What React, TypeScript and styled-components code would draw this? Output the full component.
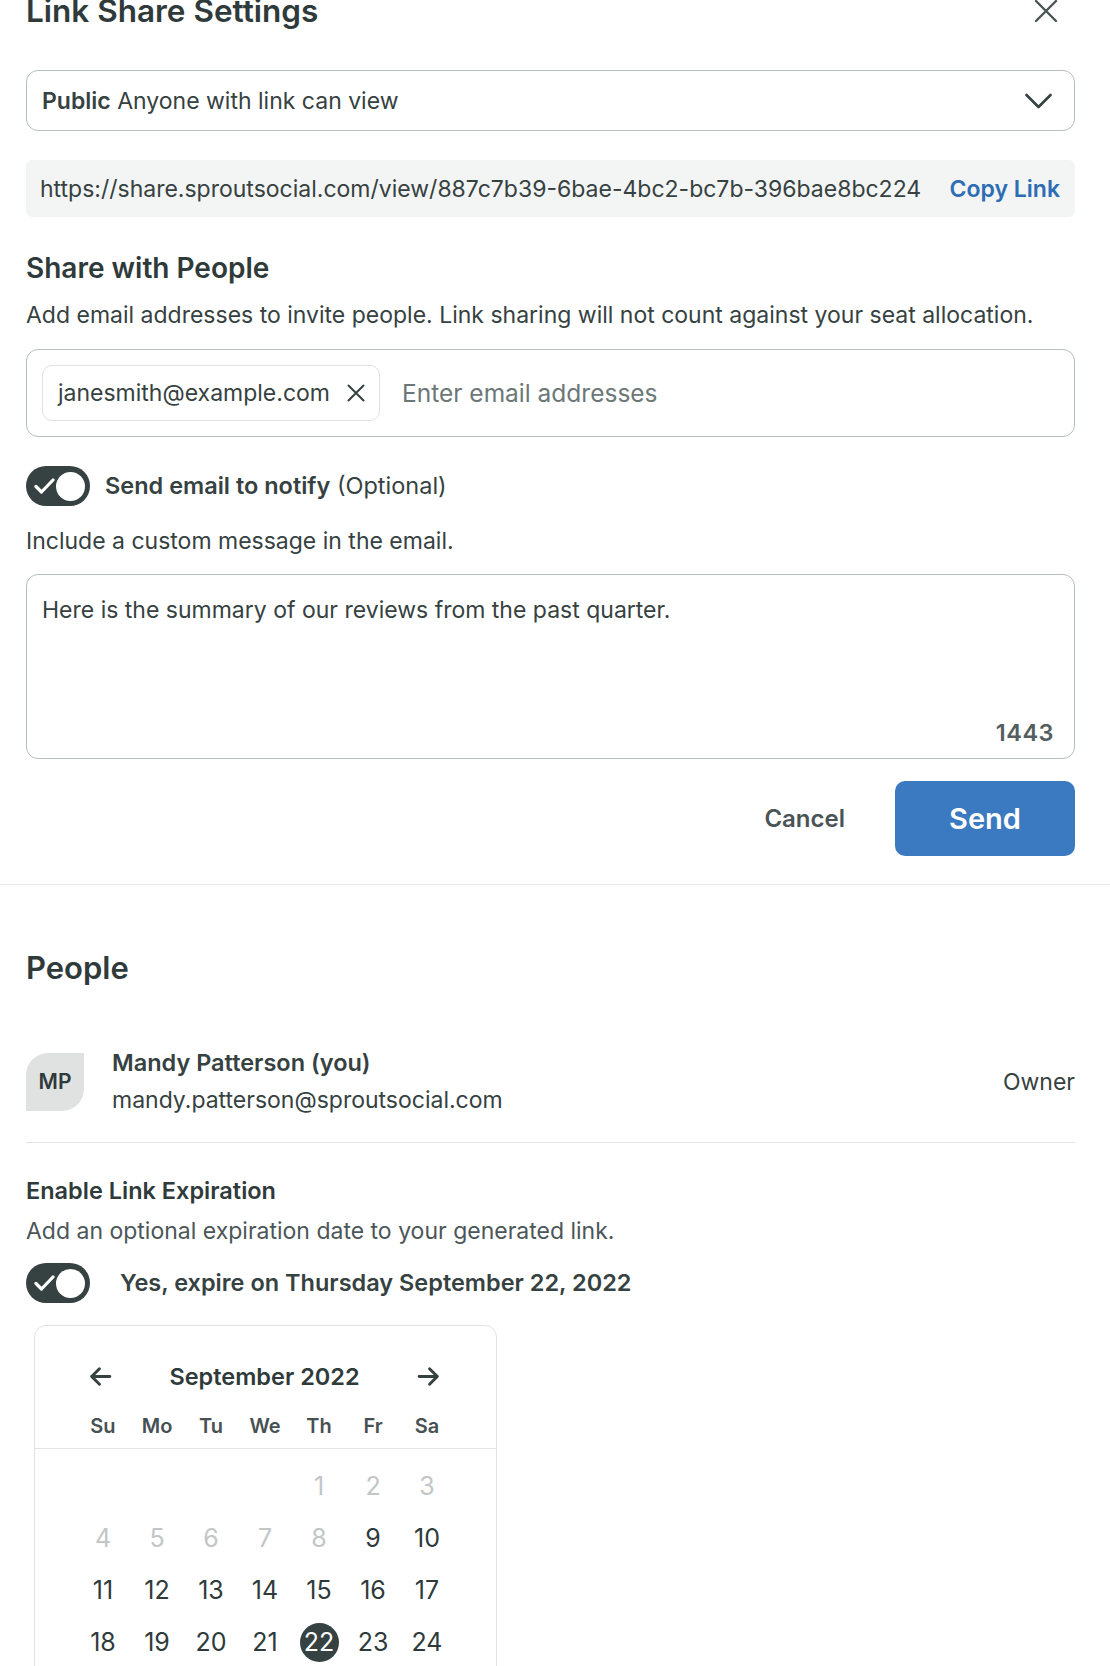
import React from "react";
import styled, { createGlobalStyle } from "styled-components";

const GlobalStyle = createGlobalStyle`
  html, body { margin: 0; padding: 0; background: #ffffff; }
  body {
    font-family: Inter, "Noto Sans", "Liberation Sans", sans-serif;
    color: #364141;
    -webkit-font-smoothing: antialiased;
    overflow: hidden;
  }
  * { box-sizing: border-box; }
`;

const Page = styled.div`
  width: 1110px;
  display: flex;
  flex-direction: column;
`;

const Section = styled.section<{ $divider?: boolean }>`
  display: flex;
  flex-direction: column;
  padding: 0 35px 0 26px;
  ${(p) => (p.$divider ? "padding-bottom: 28px; border-bottom: 1px solid #e6e8e8;" : "")}
`;

const Header = styled.div`
  display: flex;
  align-items: center;
  justify-content: space-between;
  height: 44px;
  margin-top: -11px;
`;

const Title = styled.h1`
  margin: 0;
  font-size: 31.5px;
  line-height: 44px;
  font-weight: 600;
  color: #2f3a3b;
`;

const IconButton = styled.button`
  width: 58px;
  height: 44px;
  border: 0;
  background: transparent;
  padding: 0;
  display: flex;
  align-items: center;
  justify-content: center;
  cursor: pointer;
`;

const SelectBox = styled.div`
  margin-top: 37px;
  height: 61px;
  border: 1px solid #b7bcbd;
  border-radius: 12px;
  display: flex;
  align-items: center;
  justify-content: space-between;
  padding: 0 22px 0 15px;
  font-size: 23px;
`;

const Strong = styled.span`
  font-weight: 600;
`;

const LinkBar = styled.div`
  margin-top: 29px;
  height: 57px;
  background: #f3f4f4;
  border-radius: 6px;
  display: flex;
  align-items: center;
  justify-content: space-between;
  padding: 0 15px 0 14px;
  font-size: 23px;
`;

const CopyLink = styled.button`
  border: 0;
  background: transparent;
  padding: 0;
  font-family: inherit;
  font-size: 23px;
  font-weight: 600;
  color: #2c6db3;
  cursor: pointer;
`;

const SectionHeading = styled.h2<{ $size: number; $lh: number; $top: number }>`
  margin: ${(p) => p.$top}px 0 0;
  font-size: ${(p) => p.$size}px;
  line-height: ${(p) => p.$lh}px;
  font-weight: 600;
  color: #2f3a3b;
`;

const Text = styled.p<{ $top: number; $muted?: boolean }>`
  margin: ${(p) => p.$top}px 0 0;
  font-size: 23px;
  line-height: 28px;
  color: ${(p) => (p.$muted ? "#4b5658" : "#364141")};
`;

const EmailField = styled.div`
  margin-top: 20px;
  height: 88px;
  border: 1px solid #b7bcbd;
  border-radius: 12px;
  display: flex;
  align-items: center;
  gap: 22px;
  padding: 0 15px;
`;

const Chip = styled.div`
  height: 56px;
  border: 1px solid #dfe2e2;
  border-radius: 10px;
  display: flex;
  align-items: center;
  gap: 17px;
  padding: 0 14px 0 15px;
  font-size: 23px;
`;

const Placeholder = styled.span`
  font-size: 24.5px;
  color: #6c7778;
`;

const ToggleRow = styled.div<{ $top: number; $gap: number }>`
  margin-top: ${(p) => p.$top}px;
  display: flex;
  align-items: center;
  gap: ${(p) => p.$gap}px;
`;

const ToggleTrack = styled.div`
  width: 64px;
  height: 40px;
  border-radius: 20px;
  background: #364141;
  display: flex;
  align-items: center;
  justify-content: space-between;
  padding: 0 5px 0 8px;
  flex-shrink: 0;
`;

const Knob = styled.div`
  width: 29px;
  height: 29px;
  border-radius: 50%;
  background: #ffffff;
`;

const ToggleLabel = styled.span<{ $size: number }>`
  font-size: ${(p) => p.$size}px;
  line-height: 28px;
`;

const MessageBox = styled.div`
  margin-top: 19px;
  height: 185px;
  border: 1px solid #b7bcbd;
  border-radius: 12px;
  display: flex;
  flex-direction: column;
  padding: 21px 20px 11px 15px;
`;

const MessageText = styled.div`
  flex: 1;
  font-size: 23px;
  line-height: 28px;
`;

const Counter = styled.div`
  align-self: flex-end;
  font-size: 23.5px;
  line-height: 28px;
  font-weight: 600;
  color: #545e60;
  letter-spacing: 0.5px;
`;

const Actions = styled.div`
  margin-top: 22px;
  display: flex;
  justify-content: flex-end;
  align-items: center;
  gap: 50px;
`;

const CancelButton = styled.button`
  border: 0;
  background: transparent;
  padding: 0;
  font-family: inherit;
  font-size: 24px;
  font-weight: 600;
  color: #4a5456;
  cursor: pointer;
`;

const SendButton = styled.button`
  width: 180px;
  height: 75px;
  border: 0;
  border-radius: 10px;
  background: #3b7ac1;
  color: #ffffff;
  font-family: inherit;
  font-size: 29px;
  font-weight: 600;
  cursor: pointer;
`;

const PersonRow = styled.div`
  margin-top: 62px;
  display: flex;
  align-items: center;
  gap: 28px;
  padding-bottom: 27px;
  border-bottom: 1px solid #e3e5e5;
`;

const Avatar = styled.div`
  width: 58px;
  height: 58px;
  border-radius: 22px 0 22px 0;
  background: #e0e2e2;
  display: flex;
  align-items: center;
  justify-content: center;
  font-size: 21px;
  font-weight: 600;
  color: #2f3a3b;
  flex-shrink: 0;
`;

const PersonInfo = styled.div`
  flex: 1;
  display: flex;
  flex-direction: column;
  gap: 7px;
`;

const PersonName = styled.div`
  font-size: 23.5px;
  line-height: 30px;
  font-weight: 600;
`;

const PersonEmail = styled.div`
  font-size: 23px;
  line-height: 30px;
`;

const Role = styled.div`
  font-size: 23px;
`;

const Calendar = styled.div`
  margin: 22px 0 0 8px;
  width: 463px;
  border: 1px solid #e1e3e3;
  border-radius: 12px;
  padding-top: 35px;
  padding-bottom: 30px;
`;

const CalHeader = styled.div`
  height: 30px;
  display: flex;
  align-items: center;
  justify-content: space-between;
  padding: 0 54px 0 52px;
`;

const MonthTitle = styled.div`
  font-size: 23.5px;
  font-weight: 600;
  color: #2f3a3b;
`;

const ArrowButton = styled.button`
  width: 26px;
  height: 26px;
  border: 0;
  background: transparent;
  padding: 0;
  display: flex;
  align-items: center;
  justify-content: center;
`;

const WeekRow = styled.div`
  margin-top: 23px;
  display: grid;
  grid-template-columns: repeat(7, 54px);
  padding: 0 41px 10px;
  border-bottom: 1px solid #e3e5e5;
`;

const WeekDay = styled.div`
  text-align: center;
  font-size: 20px;
  line-height: 24px;
  font-weight: 600;
  color: #475153;
`;

const DaysGrid = styled.div`
  margin-top: 11px;
  display: grid;
  grid-template-columns: repeat(7, 54px);
  grid-auto-rows: 52px;
  padding: 0 41px;
`;

const DayCell = styled.div`
  display: flex;
  align-items: center;
  justify-content: center;
`;

const DayNumber = styled.span<{ $disabled?: boolean; $selected?: boolean }>`
  width: 39px;
  height: 39px;
  border-radius: 50%;
  display: flex;
  align-items: center;
  justify-content: center;
  font-size: 25px;
  color: ${(p) => (p.$selected ? "#ffffff" : p.$disabled ? "#c2c6c7" : "#2f3a3b")};
  background: ${(p) => (p.$selected ? "#364141" : "transparent")};
`;

const CloseIcon = () => (
  <svg width="24" height="24" viewBox="0 0 24 24" fill="none">
    <path d="M2 2L22 22M22 2L2 22" stroke="#4a5456" strokeWidth="2.4" strokeLinecap="round" />
  </svg>
);

const ChevronDown = () => (
  <svg width="27" height="16" viewBox="0 0 27 16" fill="none">
    <path d="M1.5 2L13.5 14L25.5 2" stroke="#364141" strokeWidth="2.6" strokeLinecap="round" strokeLinejoin="round" />
  </svg>
);

const SmallX = () => (
  <svg width="18" height="18" viewBox="0 0 18 18" fill="none">
    <path d="M1.5 1.5L16.5 16.5M16.5 1.5L1.5 16.5" stroke="#364141" strokeWidth="2" strokeLinecap="round" />
  </svg>
);

const Check = () => (
  <svg width="21" height="16" viewBox="0 0 21 16" fill="none">
    <path d="M2 8.5L7.5 14L19 2" stroke="#ffffff" strokeWidth="3.2" strokeLinecap="round" strokeLinejoin="round" />
  </svg>
);

const Arrow = ({ dir }: { dir: "left" | "right" }) => (
  <svg width="25" height="25" viewBox="0 0 24 24" fill="none">
    <path
      d={dir === "left" ? "M21 12H3.5M11 4.5L3.5 12L11 19.5" : "M3 12H20.5M13 4.5L20.5 12L13 19.5"}
      stroke="#364141"
      strokeWidth="2.8"
      strokeLinecap="round"
      strokeLinejoin="round"
    />
  </svg>
);

const Toggle = () => (
  <ToggleTrack>
    <Check />
    <Knob />
  </ToggleTrack>
);

const weekDays = ["Su", "Mo", "Tu", "We", "Th", "Fr", "Sa"];
const days: (number | null)[] = [null, null, null, null, 1, 2, 3];
for (let d = 4; d <= 30; d++) days.push(d);

export default function App() {
  return (
    <Page>
      <GlobalStyle />
      <Section $divider>
        <Header>
          <Title>Link Share Settings</Title>
          <IconButton aria-label="Close">
            <CloseIcon />
          </IconButton>
        </Header>

        <SelectBox>
          <span>
            <Strong>Public</Strong> Anyone with link can view
          </span>
          <ChevronDown />
        </SelectBox>

        <LinkBar>
          <span>https://share.sproutsocial.com/view/887c7b39-6bae-4bc2-bc7b-396bae8bc224</span>
          <CopyLink>Copy Link</CopyLink>
        </LinkBar>

        <SectionHeading $size={28} $lh={32} $top={35}>Share with People</SectionHeading>
        <Text $top={17}>
          Add email addresses to invite people. Link sharing will not count against your seat allocation.
        </Text>

        <EmailField>
          <Chip>
            janesmith@example.com
            <SmallX />
          </Chip>
          <Placeholder>Enter email addresses</Placeholder>
        </EmailField>

        <ToggleRow $top={29} $gap={15}>
          <Toggle />
          <ToggleLabel $size={23.5}>
            <Strong>Send email to notify</Strong> (Optional)
          </ToggleLabel>
        </ToggleRow>

        <Text $top={21}>Include a custom message in the email.</Text>

        <MessageBox>
          <MessageText>Here is the summary of our reviews from the past quarter.</MessageText>
          <Counter>1443</Counter>
        </MessageBox>

        <Actions>
          <CancelButton>Cancel</CancelButton>
          <SendButton>Send</SendButton>
        </Actions>
      </Section>

      <Section>
        <SectionHeading $size={31} $lh={36} $top={65}>People</SectionHeading>

        <PersonRow>
          <Avatar>MP</Avatar>
          <PersonInfo>
            <PersonName>Mandy Patterson (you)</PersonName>
            <PersonEmail>mandy.patterson@sproutsocial.com</PersonEmail>
          </PersonInfo>
          <Role>Owner</Role>
        </PersonRow>

        <SectionHeading $size={23.5} $lh={28} $top={34}>Enable Link Expiration</SectionHeading>
        <Text $top={12} $muted>Add an optional expiration date to your generated link.</Text>

        <ToggleRow $top={18} $gap={30}>
          <Toggle />
          <ToggleLabel $size={23.5}>
            <Strong>Yes, expire on Thursday September 22, 2022</Strong>
          </ToggleLabel>
        </ToggleRow>

        <Calendar>
          <CalHeader>
            <ArrowButton aria-label="Previous month">
              <Arrow dir="left" />
            </ArrowButton>
            <MonthTitle>September 2022</MonthTitle>
            <ArrowButton aria-label="Next month">
              <Arrow dir="right" />
            </ArrowButton>
          </CalHeader>
          <WeekRow>
            {weekDays.map((w) => (
              <WeekDay key={w}>{w}</WeekDay>
            ))}
          </WeekRow>
          <DaysGrid>
            {days.map((d, i) => (
              <DayCell key={i}>
                {d !== null && (
                  <DayNumber $disabled={d < 9} $selected={d === 22}>
                    {d}
                  </DayNumber>
                )}
              </DayCell>
            ))}
          </DaysGrid>
        </Calendar>
      </Section>
    </Page>
  );
}
